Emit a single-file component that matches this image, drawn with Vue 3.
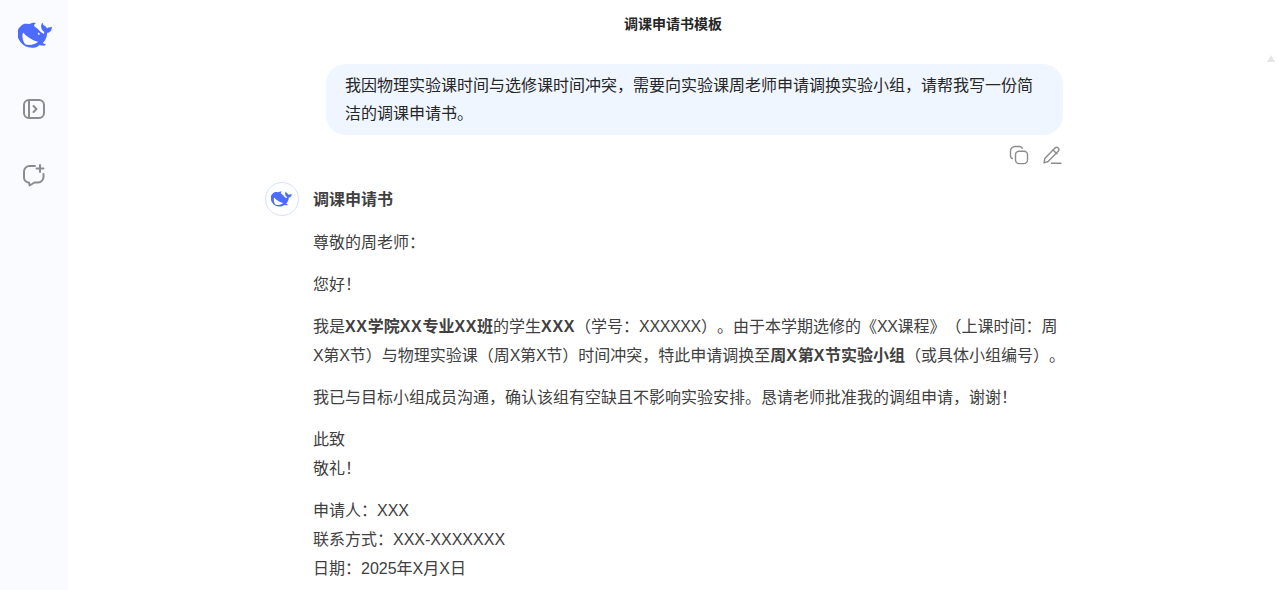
<template>
  <div class="app">
    <aside class="sidebar">
      <svg class="logo" viewBox="0 0 36 28" width="36" height="28">
        <path class="whale" :d="whalePath"/>
        <path class="cut" :d="bellyPath"/>
        <path class="cut" d="M20 10.800c.5-.2 1.700.6 1.800 1.300.1.600-.7.900-1.300.6-.6-.3-.9-1.600-.5-1.900z"/>
      </svg>
      <button class="side-btn first">
        <svg viewBox="0 0 24 24" width="24" height="24" fill="none" stroke="#8c8c8c" stroke-width="2">
          <rect x="2" y="3" width="20" height="18" rx="5"/>
          <path d="M7 3v18"/>
          <path d="M11.500 9l3 3-3 3" stroke-linecap="round" stroke-linejoin="round"/>
        </svg>
      </button>
      <button class="side-btn second">
        <svg viewBox="0 0 24 24" width="24" height="24" fill="none" stroke="#8c8c8c" stroke-width="2" stroke-linecap="round" stroke-linejoin="round">
          <path d="M13 3H7.500A5.500 5.500 0 0 0 2 8.500v6A5 5 0 0 0 6.500 19.500H7l.6 3 4.900-3h3.500a5.500 5.500 0 0 0 5.500-5.500v-3"/>
          <path d="M18 2v7M14.500 5.500h7"/>
        </svg>
      </button>
    </aside>

    <main class="main">
      <header class="title">调课申请书模板</header>
      <div class="scroller">
        <div class="column">
          <div class="question">
            <div class="bubble">我因物理实验课时间与选修课时间冲突，需要向实验课周老师申请调换实验小组，请帮我写一份简洁的调课申请书。</div>
          </div>
          <div class="actions">
            <svg viewBox="0 0 20 20" width="20" height="20" fill="none" stroke="#8c8c8c" stroke-width="1.400">
              <rect x="6.500" y="6.300" width="12" height="12.300" rx="3.500"/>
              <path d="M13.500 3.900A3 3 0 0 0 11 1.500H6A4.500 4.500 0 0 0 1.500 6v5a3 3 0 0 0 2.500 2.700"/>
            </svg>
            <svg viewBox="0 0 20 20" width="20" height="20" fill="none" stroke="#8c8c8c" stroke-width="1.400" stroke-linejoin="round" stroke-linecap="round">
              <path d="M2 17.800l.8-4.300L12.900 3a2.200 2.200 0 0 1 3.200 0l.1.100a2.200 2.200 0 0 1 0 3.100L6 16.500z"/>
              <path d="M11 5l3.900 3.800M9.500 18.200h9.500"/>
            </svg>
          </div>
          <div class="answer">
            <div class="avatar">
              <svg viewBox="0 0 36 28" width="22" height="17">
                <path class="whale" :d="whalePath"/>
                <path class="cut" :d="bellyPath"/>
              </svg>
            </div>
            <div class="content">
              <h3>调课申请书</h3>
              <p>尊敬的周老师：</p>
              <p>您好！</p>
              <p>我是<b><span class="x">XX</span>学院<span class="x">XX</span>专业<span class="x">XX</span>班</b>的学生<b><span class="x">XXX</span></b>（学号：<span class="n">XXXXXX</span>）。由于本学期选修的《<span class="n">XX</span>课程》（上课时间：周<span class="n">X</span>第<span class="n">X</span>节）与物理实验课（周<span class="n">X</span>第<span class="n">X</span>节）时间冲突，特此申请调换至<b>周<span class="x">X</span>第<span class="x">X</span>节实验小组</b>（或具体小组编号）。</p>
              <p>我已与目标小组成员沟通，确认该组有空缺且不影响实验安排。恳请老师批准我的调组申请，谢谢！</p>
              <p>此致<br>敬礼！</p>
              <p>申请人：XXX<br>联系方式：XXX-XXXXXXX<br>日期：2025年X月X日</p>
            </div>
          </div>
        </div>
        <div class="scroll-up"></div>
      </div>
    </main>
  </div>
</template>

<script setup>
const whalePath = "M35.600 3.600c-.4-.2-.6.2-.8.4-.1.1-.2.2-.3.300-.6.600-1.300 1-2.200 1-1.300-.1-2.400.3-3.400 1.300-.2-1.200-.9-2-2-2.500-.6-.3-1.100-.6-1.500-1.100-.3-.4-.4-.8-.5-1.300-.1-.3-.2-.6-.5-.6-.3-.1-.5.2-.6.400-.5.900-.7 1.900-.7 2.900.1 2.300 1 4 3 5.300.2.100.3.300.2.500-.1.500-.3.900-.4 1.300-.1.300-.2.300-.5.200-1.100-.5-2.100-1.200-2.900-2-1.500-1.400-2.800-3-4.500-4.200-.4-.3-.8-.5-1.200-.8-1.700-1.700.2-3 .7-3.200.5-.2.200-.8-1.300-.8-1.500 0-2.900.5-4.700 1.200-.3.100-.5.200-.8.200-1.600-.3-3.300-.4-5-.2C5.200 2.100 2.600 3.700.7 6.500-1.600 9.900-.9 14.300 1 17.800c2 3.700 5 6.700 9.400 7.500 4.300.8 8.200.5 11.300-2.400.9.200 2 .6 3 .7.800.1 1.600 0 2.200-.1.900-.2.900-1 .5-1.200-2.700-1.300-2.100-.8-2.600-1.200 1.400-1.700 3.500-3.400 4.300-9 .1-.4 0-.7 0-1 0-.2.100-.3.300-.3.700-.1 1.300-.3 1.900-.6 1.700-1 2.400-2.600 2.600-4.500 0-.3 0-.6-.3-.7z"
const bellyPath = "M5 10.500C3.800 14 4.600 19.500 7.500 22.500c4.500 1 9.500.2 12.500-2.700C14.500 18.500 9 15 5 10.500z"
</script>

<style>
html, body {
  margin: 0;
  overflow: hidden;
  background: #fff;
}
</style>

<style scoped>
.app {
  display: flex;
  height: 590px;
  overflow: hidden;
  font-family: "Liberation Sans", "Noto Sans CJK SC", sans-serif;
  color: #262626;
  text-spacing-trim: space-all;
}

.sidebar {
  width: 68px;
  flex: none;
  background: #f9fbff;
  display: flex;
  flex-direction: column;
  align-items: center;
  padding-top: 22px;
  box-sizing: border-box;
}

.logo {
  margin-left: 4px;
  display: block;
}

.whale {
  fill: #4d6bfe;
}

.cut {
  fill: #fff;
}

.side-btn {
  border: none;
  background: none;
  padding: 0;
  width: 24px;
  height: 24px;
}

.side-btn.first {
  margin-top: 47px;
}

.side-btn.second {
  margin-top: 42px;
}

.main {
  flex: 1;
  display: flex;
  flex-direction: column;
  min-width: 0;
}

.title {
  height: 48px;
  line-height: 48px;
  text-align: center;
  font-size: 14px;
  font-weight: 700;
  color: #262626;
}

.scroller {
  flex: 1;
  position: relative;
  padding-right: 18px;
  min-height: 0;
  overflow: hidden;
}

.column {
  width: 798px;
  margin: 0 auto;
  padding-top: 16px;
}

.question {
  display: flex;
  justify-content: flex-end;
}

.bubble {
  width: 698px;
  padding: 8px 20px 7px 19px;
  background: #eff6ff;
  border-radius: 20px;
  font-size: 16px;
  line-height: 28px;
  color: #262626;
}

.actions {
  display: flex;
  justify-content: flex-end;
  gap: 13px;
  margin-top: 10px;
  padding-right: 1px;
  height: 20px;
}

.answer {
  display: flex;
  margin-top: 17px;
}

.avatar {
  width: 32px;
  height: 32px;
  flex: none;
  border: 1px solid #d6e2ff;
  border-radius: 50%;
  display: flex;
  align-items: center;
  justify-content: center;
  margin-right: 14px;
}

.content {
  width: 753.5px;
  flex: none;
  font-size: 16px;
  line-height: 29px;
  color: #404040;
  padding-top: 4px;
}

.content h3 {
  margin: 0 0 14px;
  font-size: 16px;
  line-height: 28px;
  font-weight: 700;
}

.content p {
  margin: 0 0 13px;
}

.content b {
  font-weight: 700;
}

.x {
  letter-spacing: 0.66px;
}

.n {
  letter-spacing: -0.37px;
}

.scroll-up {
  position: absolute;
  right: 3px;
  top: 7px;
  width: 0;
  height: 0;
  border-left: 4px solid transparent;
  border-right: 4px solid transparent;
  border-bottom: 7px solid #e6e6e6;
}
</style>
